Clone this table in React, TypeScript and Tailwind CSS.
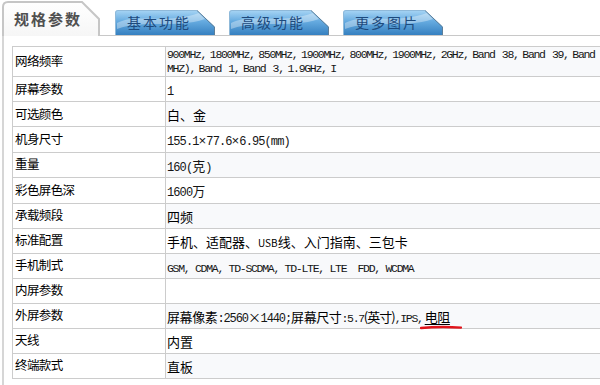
import type { ReactNode } from "react";

const cjk = "font-['Noto_Sans_CJK_SC','Noto_Sans',sans-serif]";
const mono = "font-['Liberation_Mono','Noto_Sans_CJK_SC',monospace] text-[12px] tracking-[-0.9px] text-[#151515]";
const monoNarrow = "font-['Liberation_Mono','Noto_Sans_CJK_SC',monospace] text-[11.5px] tracking-[-1.3px] text-[#151515]";
const monoTight = "font-['Liberation_Mono','Noto_Sans_CJK_SC',monospace] text-[12px] tracking-[-1.1px] text-[#151515]";

const ActiveTab = () => (
  <div className="relative w-[98px] h-[35px] flex items-center pl-[12px] pt-[2px]">
    <svg className="absolute inset-0" width="98" height="35" viewBox="0 0 98 35">
      <defs>
        <linearGradient id="wg" x1="0" y1="0" x2="0" y2="1">
          <stop offset="0" stopColor="#ffffff" />
          <stop offset="1" stopColor="#f6f6f6" />
        </linearGradient>
      </defs>
      <path d="M1 35 V6 Q1 1 6 1 H80 L97 18 V35" fill="url(#wg)" stroke="#c6c6c6" strokeWidth="2" />
    </svg>
    <span className={`relative ${cjk} text-[15px] font-semibold tracking-[2px] text-[#505050]`}>规格参数</span>
  </div>
);

const BlueTab = ({ label, id }: { label: string; id: string }) => (
  <div className="relative w-[100px] h-[26px] border-b border-[#c8c8c8] flex items-center pl-[12px]">
    <svg className="absolute left-0 top-0" width="100" height="25" viewBox="0 0 100 25">
      <defs>
        <linearGradient id={id} x1="0" y1="0" x2="0" y2="1">
          <stop offset="0" stopColor="#a9d6f5" />
          <stop offset="0.45" stopColor="#66abe0" />
          <stop offset="1" stopColor="#3680c0" />
        </linearGradient>
      </defs>
      <path d="M0 25 V3 Q0 0 3 0 H82 L100 17 V25 Z" fill={`url(#${id})`} />
      <path d="M2 13 C 22 3, 50 15, 84 3 L 90 9 C 60 19, 30 9, 2 19 Z" fill="#ffffff" opacity="0.35" />
      <path d="M82 0.5 L99.5 17 V25" fill="none" stroke="#5d7e98" strokeWidth="1" />
      <path d="M0.5 25 V3 Q0.5 0.5 3 0.5 H82" fill="none" stroke="#8fb9d9" strokeWidth="1" />
    </svg>
    <span className={`relative ${cjk} text-[14px] tracking-[2px] text-[#1d4a7d]`}>{label}</span>
  </div>
);

const rows: { label: string; value: ReactNode; tall?: boolean }[] = [
  {
    label: "网络频率",
    tall: true,
    value: (
      <div className={`${monoNarrow} leading-[14px] whitespace-pre [word-spacing:-2px]`}>
        {"900MHz, 1800MHz, 850MHz, 1900MHz, 800MHz, 1900MHz, 2GHz, Band  38, Band  39, Band  40(2300-2400"}
        <br />
        {"MHZ), Band  1, Band  3, 1.9GHz, I"}
      </div>
    ),
  },
  { label: "屏幕参数", value: <span className={mono}>1</span> },
  { label: "可选颜色", value: <span className={`${cjk} text-[13px]`}>白、金</span> },
  {
    label: "机身尺寸",
    value: (
      <span className={mono}>
        155.1<span className="text-[13px] tracking-normal">×</span>77.6
        <span className="text-[13px] tracking-normal">×</span>6.95(mm)
      </span>
    ),
  },
  {
    label: "重量",
    value: (
      <span className={mono}>
        160(<span className="tracking-normal text-[13px]">克</span>)
      </span>
    ),
  },
  {
    label: "彩色屏色深",
    value: (
      <span className={mono}>
        1600<span className="tracking-normal text-[13px]">万</span>
      </span>
    ),
  },
  { label: "承载频段", value: <span className={`${cjk} text-[13px]`}>四频</span> },
  {
    label: "标准配置",
    value: (
      <span className={`${cjk} text-[13px]`}>
        手机、适配器、<span className="text-[10px]">USB</span>线、入门指南、三包卡
      </span>
    ),
  },
  {
    label: "手机制式",
    value: <span className={`${monoNarrow} whitespace-pre`}>GSM, CDMA, TD-SCDMA, TD-LTE, LTE  FDD, WCDMA</span>,
  },
  { label: "内屏参数", value: null },
  {
    label: "外屏参数",
    value: (
      <span className={`${cjk} text-[13px] tracking-[-0.4px]`}>
        屏幕像素<span className={monoTight}>:2560</span>
        <span className="text-[13px]">×</span>
        <span className={monoTight}>1440;</span>屏幕尺寸<span className={monoNarrow}>:5.7</span>
        <span className="tracking-[-1px]">(英寸)</span>
        <span className={monoNarrow}>,IPS,</span>
        <span className="relative underline underline-offset-2 ml-[2px]">
          电阻
          <svg className="absolute left-[-5px] top-[18px]" width="42" height="5" viewBox="0 0 42 5">
            <path d="M1 3 Q 20 1.2 41 2.6" fill="none" stroke="#e0141b" strokeWidth="2.4" strokeLinecap="round" />
          </svg>
        </span>
      </span>
    ),
  },
  { label: "天线", value: <span className={`${cjk} text-[13px]`}>内置</span> },
  { label: "终端款式", value: <span className={`${cjk} text-[13px]`}>直板</span> },
];

export default function App() {
  return (
    <div className="w-[600px] h-[385px] overflow-hidden bg-white">
      <div className="flex items-end h-[36px] pl-[2px] pt-[1px]">
        <ActiveTab />
        <div className="w-[15px] h-[1px] bg-[#c8c8c8]" />
        <BlueTab label="基本功能" id="bt1" />
        <div className="w-[14px] h-[1px] bg-[#c8c8c8]" />
        <BlueTab label="高级功能" id="bt2" />
        <div className="w-[14px] h-[1px] bg-[#c8c8c8]" />
        <BlueTab label="更多图片" id="bt3" />
        <div className="flex-1 h-[1px] bg-[#c8c8c8]" />
      </div>
      <div className="ml-[2px] h-[349px] border-l-2 border-[#d6d6d6] pl-[8px] pt-[10px]">
        <table className="border-collapse">
          <tbody>
            {rows.map((r, i) => (
              <tr key={r.label} className={r.tall ? "h-[30px]" : "h-[25px]"}>
                <td
                  className={`w-[153px] min-w-[153px] border border-[#cccccc] pl-[2px] p-0 align-middle ${cjk} text-[12.5px] tracking-[-0.6px] text-black`}
                >
                  {r.label}
                </td>
                <td
                  className={`border border-[#cccccc] pl-[1px] pr-2 p-0 align-middle text-black ${
                    i % 2 === 0 ? "bg-[#f8f9fb]" : "bg-white"
                  }`}
                >
                  {r.value}
                </td>
              </tr>
            ))}
          </tbody>
        </table>
      </div>
    </div>
  );
}
